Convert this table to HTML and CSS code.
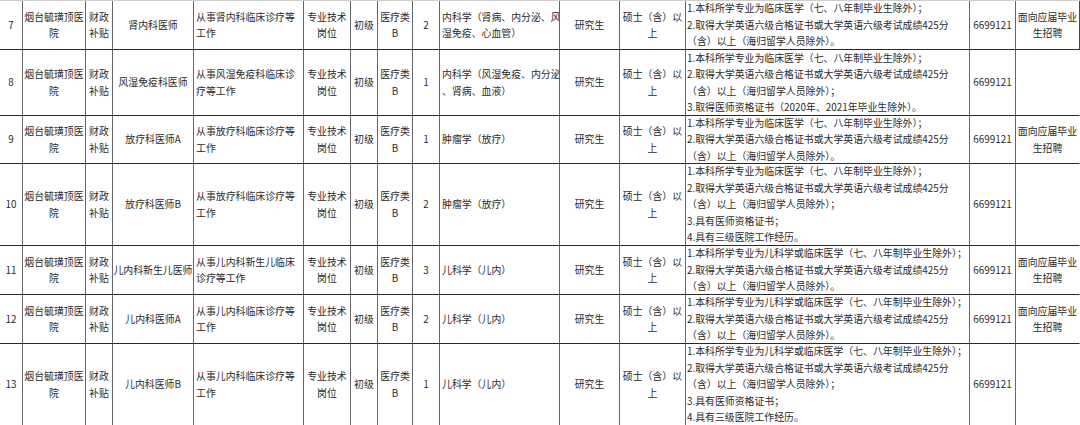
FILE: index.html
```html
<!DOCTYPE html>
<html lang="zh-CN">
<head>
<meta charset="utf-8">
<title>岗位表</title>
<link rel="stylesheet" href="styles.css">
</head>
<body>
<div class="sheet">
  <!-- 7 -->
  <div class="c">7</div>
  <div class="c">烟台毓璜顶医<br>院</div>
  <div class="c">财政<br>补贴</div>
  <div class="c">肾内科医师</div>
  <div class="c l">从事肾内科临床诊疗等<br>工作</div>
  <div class="c">专业技术<br>岗位</div>
  <div class="c">初级</div>
  <div class="c">医疗类<br>B</div>
  <div class="c">2</div>
  <div class="c l">内科学（肾病、内分泌、风<br>湿免疫、心血管）</div>
  <div class="c">研究生</div>
  <div class="c">硕士（含）以<br>上</div>
  <div class="c l r">1.本科所学专业为临床医学（七、八年制毕业生除外）；<br>2.取得大学英语六级合格证书或大学英语六级考试成绩425分<br>（含）以上（海归留学人员除外）。</div>
  <div class="c">6699121</div>
  <div class="c last edge">面向应届毕业<br>生招聘</div>

  <!-- 8 -->
  <div class="c">8</div>
  <div class="c">烟台毓璜顶医<br>院</div>
  <div class="c">财政<br>补贴</div>
  <div class="c">风湿免疫科医师</div>
  <div class="c l">从事风湿免疫科临床诊<br>疗等工作</div>
  <div class="c">专业技术<br>岗位</div>
  <div class="c">初级</div>
  <div class="c">医疗类<br>B</div>
  <div class="c">1</div>
  <div class="c l">内科学（风湿免疫、内分泌<br>、肾病、血液）</div>
  <div class="c">研究生</div>
  <div class="c">硕士（含）以<br>上</div>
  <div class="c l r">1.本科所学专业为临床医学（七、八年制毕业生除外）；<br>2.取得大学英语六级合格证书或大学英语六级考试成绩425分<br>（含）以上（海归留学人员除外）；<br>3.取得医师资格证书（2020年、2021年毕业生除外）。</div>
  <div class="c">6699121</div>
  <div class="c last"></div>

  <!-- 9 -->
  <div class="c">9</div>
  <div class="c">烟台毓璜顶医<br>院</div>
  <div class="c">财政<br>补贴</div>
  <div class="c">放疗科医师A</div>
  <div class="c l">从事放疗科临床诊疗等<br>工作</div>
  <div class="c">专业技术<br>岗位</div>
  <div class="c">初级</div>
  <div class="c">医疗类<br>B</div>
  <div class="c">1</div>
  <div class="c l">肿瘤学（放疗）</div>
  <div class="c">研究生</div>
  <div class="c">硕士（含）以<br>上</div>
  <div class="c l r">1.本科所学专业为临床医学（七、八年制毕业生除外）；<br>2.取得大学英语六级合格证书或大学英语六级考试成绩425分<br>（含）以上（海归留学人员除外）。</div>
  <div class="c">6699121</div>
  <div class="c last">面向应届毕业<br>生招聘</div>

  <!-- 10 -->
  <div class="c">10</div>
  <div class="c">烟台毓璜顶医<br>院</div>
  <div class="c">财政<br>补贴</div>
  <div class="c">放疗科医师B</div>
  <div class="c l">从事放疗科临床诊疗等<br>工作</div>
  <div class="c">专业技术<br>岗位</div>
  <div class="c">初级</div>
  <div class="c">医疗类<br>B</div>
  <div class="c">2</div>
  <div class="c l">肿瘤学（放疗）</div>
  <div class="c">研究生</div>
  <div class="c">硕士（含）以<br>上</div>
  <div class="c l r">1.本科所学专业为临床医学（七、八年制毕业生除外）；<br>2.取得大学英语六级合格证书或大学英语六级考试成绩425分<br>（含）以上（海归留学人员除外）；<br>3.具有医师资格证书；<br>4.具有三级医院工作经历。</div>
  <div class="c">6699121</div>
  <div class="c last"></div>

  <!-- 11 -->
  <div class="c">11</div>
  <div class="c">烟台毓璜顶医<br>院</div>
  <div class="c">财政<br>补贴</div>
  <div class="c tight">儿内科新生儿医师</div>
  <div class="c l">从事儿内科新生儿临床<br>诊疗等工作</div>
  <div class="c">专业技术<br>岗位</div>
  <div class="c">初级</div>
  <div class="c">医疗类<br>B</div>
  <div class="c">3</div>
  <div class="c l">儿科学（儿内）</div>
  <div class="c">研究生</div>
  <div class="c">硕士（含）以<br>上</div>
  <div class="c l r">1.本科所学专业为儿科学或临床医学（七、八年制毕业生除外）；<br>2.取得大学英语六级合格证书或大学英语六级考试成绩425分<br>（含）以上（海归留学人员除外）。</div>
  <div class="c">6699121</div>
  <div class="c last">面向应届毕业<br>生招聘</div>

  <!-- 12 -->
  <div class="c">12</div>
  <div class="c">烟台毓璜顶医<br>院</div>
  <div class="c">财政<br>补贴</div>
  <div class="c">儿内科医师A</div>
  <div class="c l">从事儿内科临床诊疗等<br>工作</div>
  <div class="c">专业技术<br>岗位</div>
  <div class="c">初级</div>
  <div class="c">医疗类<br>B</div>
  <div class="c">2</div>
  <div class="c l">儿科学（儿内）</div>
  <div class="c">研究生</div>
  <div class="c">硕士（含）以<br>上</div>
  <div class="c l r">1.本科所学专业为儿科学或临床医学（七、八年制毕业生除外）；<br>2.取得大学英语六级合格证书或大学英语六级考试成绩425分<br>（含）以上（海归留学人员除外）。</div>
  <div class="c">6699121</div>
  <div class="c last">面向应届毕业<br>生招聘</div>

  <!-- 13 -->
  <div class="c">13</div>
  <div class="c">烟台毓璜顶医<br>院</div>
  <div class="c">财政<br>补贴</div>
  <div class="c">儿内科医师B</div>
  <div class="c l">从事儿内科临床诊疗等<br>工作</div>
  <div class="c">专业技术<br>岗位</div>
  <div class="c">初级</div>
  <div class="c">医疗类<br>B</div>
  <div class="c">1</div>
  <div class="c l">儿科学（儿内）</div>
  <div class="c">研究生</div>
  <div class="c">硕士（含）以<br>上</div>
  <div class="c l r">1.本科所学专业为儿科学或临床医学（七、八年制毕业生除外）；<br>2.取得大学英语六级合格证书或大学英语六级考试成绩425分<br>（含）以上（海归留学人员除外）；<br>3.具有医师资格证书；<br>4.具有三级医院工作经历。</div>
  <div class="c">6699121</div>
  <div class="c last"></div>
</div>
</body>
</html>
```

FILE: styles.css
```css
html, body {
  margin: 0;
  padding: 0;
  background: #ffffff;
}

body {
  width: 1080px;
  height: 425px;
  overflow: hidden;
  font-family: "Noto Sans CJK SC", "Noto Sans", sans-serif;
  font-size: 9.9px;
  line-height: 16.4px;
  color: #2a2a2a;
}

.sheet {
  display: grid;
  grid-template-columns: 23px 63px 27px 81px 110px 47px 27px 35px 27px 120px 60px 66px 284px 46px 64px;
  grid-template-rows: 49px 66px 48px 82px 49px 49px 82px;
  width: 1080px;
  border-top: 1px solid #cfcfcf;
}

.c {
  box-sizing: border-box;
  display: flex;
  align-items: center;
  justify-content: center;
  text-align: center;
  white-space: nowrap;
  overflow: hidden;
  border-right: 1px solid #666666;
  border-bottom: 1px solid #2a2a2a;
  padding: 0 1px;
}

.c.tight {
  padding: 0;
}

.c.l {
  justify-content: flex-start;
  text-align: left;
  padding-left: 2px;
}

.c.r {
  padding-left: 1px;
}

.c.last {
  border-right: 1px solid transparent;
}

.c.last.edge {
  border-right-color: #4a4a4a;
}
```
